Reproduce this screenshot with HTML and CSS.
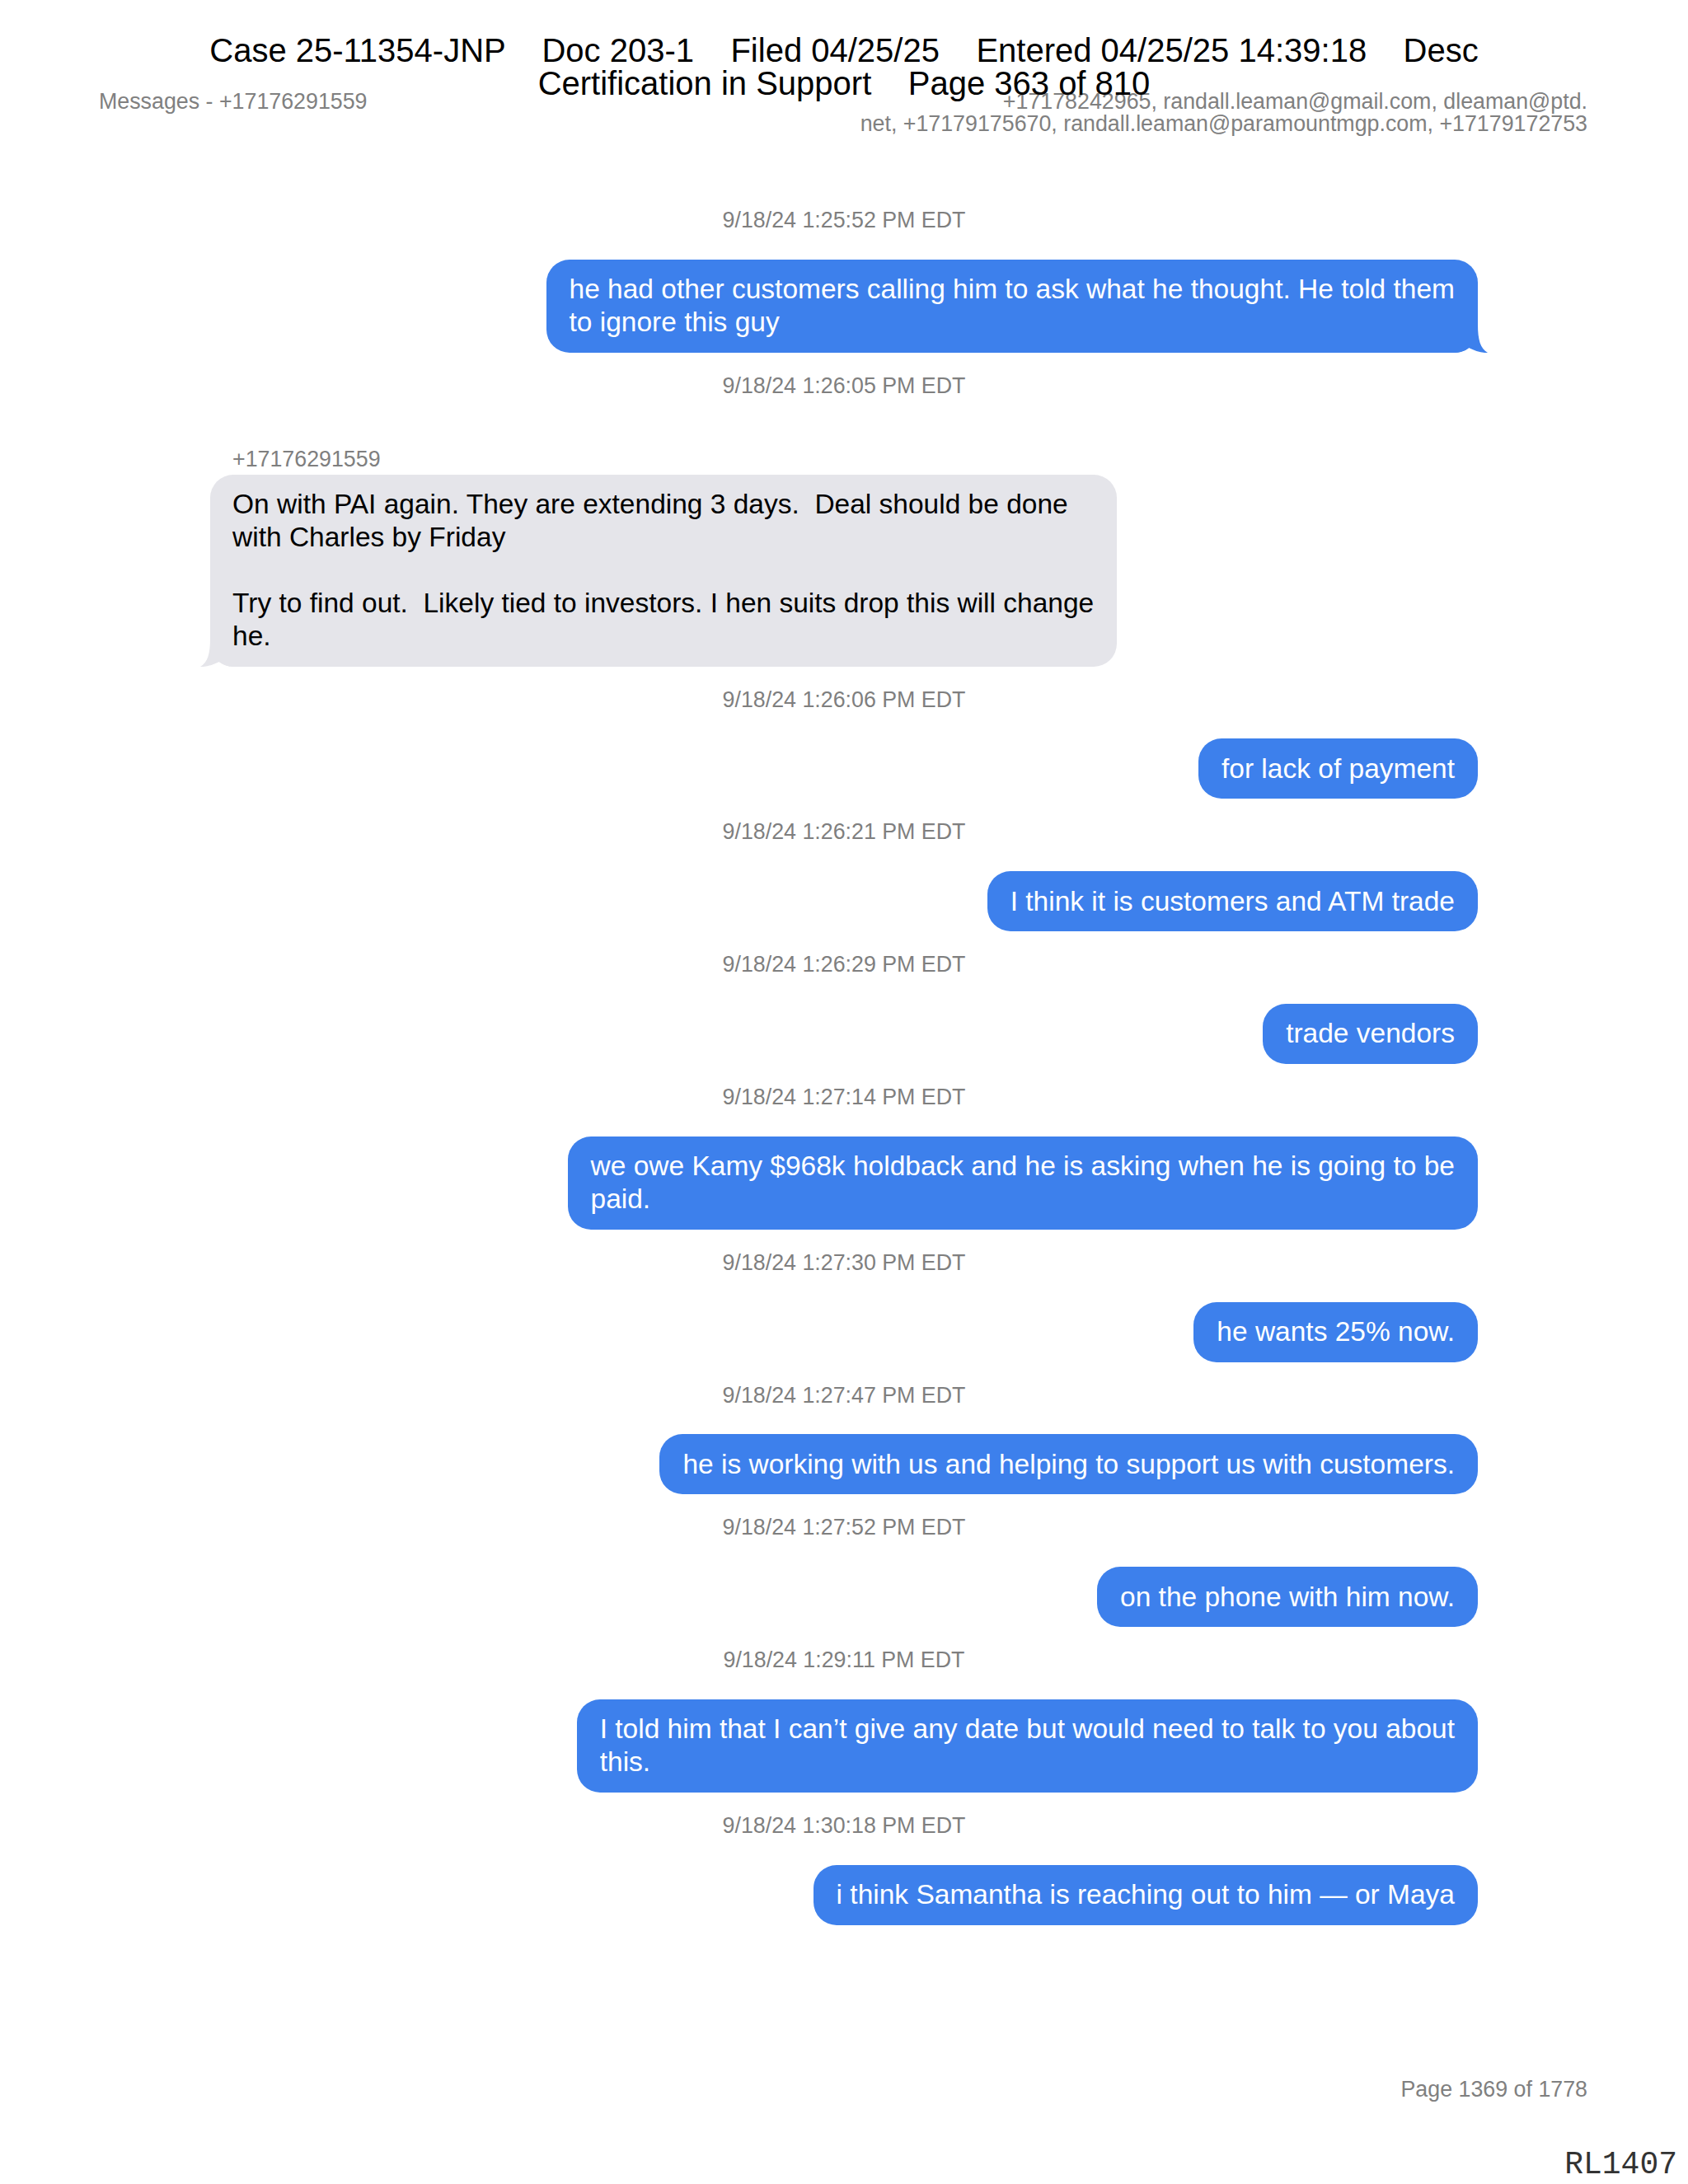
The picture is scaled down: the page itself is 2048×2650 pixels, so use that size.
FILE: index.html
```html
<!DOCTYPE html>
<html lang="en">
<head>
<meta charset="utf-8">
<title>Messages - +17176291559</title>
<link rel="stylesheet" href="styles.css">
</head>
<body>
<div class="page">
  <div class="stamp">
    <div class="stamp-line">Case 25-11354-JNP    Doc 203-1    Filed 04/25/25    Entered 04/25/25 14:39:18    Desc</div>
    <div class="stamp-line">Certification in Support    Page 363 of 810</div>
  </div>

  <header class="doc-head">
    <div class="doc-title">Messages - +17176291559</div>
    <div class="doc-parties">
      <div>+17178242965, randall.leaman@gmail.com, dleaman@ptd.</div>
      <div>net, +17179175670, randall.leaman@paramountmgp.com, +17179172753</div>
    </div>
  </header>

  <main class="thread">
    <div class="ts">9/18/24 1:25:52 PM EDT</div>
    <div class="bubble sent tailed"><span class="line">he had other customers calling him to ask what he thought. He told them</span><span class="line">to ignore this guy</span><svg class="tail" viewBox="0 0 40 34" aria-hidden="true"><path d="M0,0 H28 C28,18 31,29 40,34 C33,34.6 24,31.5 17,28 C12,32 6,34 0,34 Z"/></svg></div>

    <div class="ts">9/18/24 1:26:05 PM EDT</div>
    <div class="sender">+17176291559</div>
    <div class="bubble recv tailed"><span class="line">On with PAI again. They are extending 3 days.  Deal should be done</span><span class="line">with Charles by Friday</span><span class="line"> </span><span class="line">Try to find out.  Likely tied to investors. I hen suits drop this will change</span><span class="line">he.</span><svg class="tail" viewBox="0 0 40 34" aria-hidden="true"><path d="M0,0 H28 C28,18 31,29 40,34 C33,34.6 24,31.5 17,28 C12,32 6,34 0,34 Z"/></svg></div>

    <div class="ts">9/18/24 1:26:06 PM EDT</div>
    <div class="bubble sent"><span class="line">for lack of payment</span></div>

    <div class="ts">9/18/24 1:26:21 PM EDT</div>
    <div class="bubble sent"><span class="line">I think it is customers and ATM trade</span></div>

    <div class="ts">9/18/24 1:26:29 PM EDT</div>
    <div class="bubble sent"><span class="line">trade vendors</span></div>

    <div class="ts">9/18/24 1:27:14 PM EDT</div>
    <div class="bubble sent"><span class="line">we owe Kamy $968k holdback and he is asking when he is going to be</span><span class="line">paid.</span></div>

    <div class="ts">9/18/24 1:27:30 PM EDT</div>
    <div class="bubble sent"><span class="line">he wants 25% now.</span></div>

    <div class="ts">9/18/24 1:27:47 PM EDT</div>
    <div class="bubble sent"><span class="line">he is working with us and helping to support us with customers.</span></div>

    <div class="ts">9/18/24 1:27:52 PM EDT</div>
    <div class="bubble sent"><span class="line">on the phone with him now.</span></div>

    <div class="ts">9/18/24 1:29:11 PM EDT</div>
    <div class="bubble sent"><span class="line">I told him that I can’t give any date but would need to talk to you about</span><span class="line">this.</span></div>

    <div class="ts">9/18/24 1:30:18 PM EDT</div>
    <div class="bubble sent"><span class="line">i think Samantha is reaching out to him — or Maya</span></div>
  </main>

  <footer class="doc-foot">Page 1369 of 1778</footer>
  <div class="bates">RL1407</div>
</div>
</body>
</html>
```

FILE: styles.css
```css
* {
  box-sizing: border-box;
}

html, body {
  margin: 0;
  padding: 0;
  background: #ffffff;
}

body {
  font-family: "Liberation Sans", Arial, sans-serif;
  color: #000000;
}

.page {
  position: relative;
  width: 2048px;
  height: 2650px;
  overflow: hidden;
}

/* court filing stamp, printed over the page */
.stamp {
  position: absolute;
  top: 41px;
  left: 0;
  right: 0;
  text-align: center;
  font-size: 40px;
  line-height: 40px;
  color: #000000;
  z-index: 2;
}

.stamp-line {
  white-space: pre;
}

/* page header */
.doc-head {
  display: flex;
  justify-content: space-between;
  align-items: flex-start;
  padding: 110px 122px 0 120px;
  font-size: 26.8px;
  line-height: 27px;
  color: #808080;
}

.doc-parties {
  text-align: right;
}

/* conversation */
.thread {
  display: flex;
  flex-direction: column;
  margin: 87px 255px 0 255px;
}

.ts {
  align-self: center;
  font-size: 26.8px;
  line-height: 32px;
  color: #7f7f7f;
  margin-bottom: 31.8px;
}

.sender {
  align-self: flex-start;
  margin: 25px 0 3px 27px;
  font-size: 26.8px;
  line-height: 32px;
  color: #7f7f7f;
}

.bubble {
  position: relative;
  display: flex;
  flex-direction: column;
  padding: 16.5px 28px;
  border-radius: 28px;
  font-size: 33.5px;
  line-height: 40px;
  margin-bottom: 24px;
}

.bubble .line {
  display: block;
  white-space: pre;
  min-height: 40px;
}

.bubble.sent {
  align-self: flex-end;
  background: #3d80ec;
  color: #ffffff;
}

.bubble.recv {
  align-self: flex-start;
  background: #e5e5ea;
  color: #000000;
  padding-left: 27px;
}

.tail {
  position: absolute;
  bottom: 0;
  width: 40px;
  height: 34px;
  display: block;
}

.sent .tail {
  right: -12px;
  fill: #3d80ec;
}

.recv .tail {
  left: -12px;
  fill: #e5e5ea;
  transform: scaleX(-1);
}

/* page footer */
.doc-foot {
  margin: 159px 122px 0 0;
  text-align: right;
  font-size: 26.8px;
  line-height: 32px;
  color: #808080;
}

.bates {
  margin-top: 57px;
  padding-right: 13px;
  text-align: right;
  font-family: "Liberation Mono", "Courier New", monospace;
  font-size: 38px;
  line-height: 38px;
  color: #333333;
}
```
